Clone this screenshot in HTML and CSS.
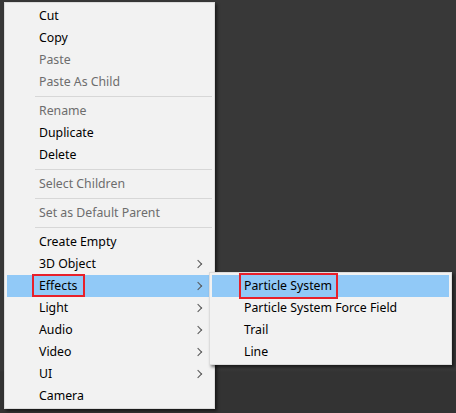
FILE: index.html
```html
<!DOCTYPE html>
<html>
<head>
<meta charset="utf-8">
<link rel="stylesheet" href="styles.css">
</head>
<body>
<div class="desk">
  <div class="menu main">
    <div class="item">Cut</div>
    <div class="item">Copy</div>
    <div class="item off">Paste</div>
    <div class="item off">Paste As Child</div>
    <div class="sep"></div>
    <div class="item off">Rename</div>
    <div class="item">Duplicate</div>
    <div class="item">Delete</div>
    <div class="sep"></div>
    <div class="item off">Select Children</div>
    <div class="sep"></div>
    <div class="item off">Set as Default Parent</div>
    <div class="sep"></div>
    <div class="item">Create Empty</div>
    <div class="item sub">3D Object</div>
    <div class="item sub hot"><span class="mark mark-a">Effects</span></div>
    <div class="item sub">Light</div>
    <div class="item sub">Audio</div>
    <div class="item sub">Video</div>
    <div class="item sub">UI</div>
    <div class="item">Camera</div>
  </div>
  <div class="menu child">
    <div class="item hot"><span class="mark mark-b">Particle System</span></div>
    <div class="item">Particle System Force Field</div>
    <div class="item">Trail</div>
    <div class="item">Line</div>
  </div>
</div>
</body>
</html>
```
FILE: styles.css
```css
html, body {
  margin: 0;
  padding: 0;
}
body {
  width: 456px;
  height: 413px;
  overflow: hidden;
  background: #383838;
  font-family: "Noto Sans", "Segoe UI", sans-serif;
  font-size: 12.3px;
}
.desk {
  position: relative;
  width: 456px;
  height: 413px;
  background: linear-gradient(#383838 0, #383838 370px, #333 372px);
}
.menu {
  position: absolute;
  box-sizing: border-box;
  background: #f2f2f2;
  border: 1px solid #dcdcdc;
  box-shadow: 2px 2px 3px rgba(0, 0, 0, 0.55);
  padding: 2px 2px 1px 2px;
  display: flex;
  flex-direction: column;
}
.main {
  left: 4px;
  top: 2px;
  width: 211px;
}
.child {
  left: 209px;
  top: 272px;
  width: 243px;
  padding-bottom: 1px;
}
.item {
  position: relative;
  height: 22px;
  line-height: 22px;
  padding-left: 32px;
  color: #000;
  white-space: nowrap;
}
.item.off {
  color: #6d6d6d;
}
.item.hot {
  background: #91c9f7;
}
.item.sub::after {
  content: "";
  position: absolute;
  right: 11px;
  top: 8px;
  width: 5px;
  height: 5px;
  border-right: 1px solid #555;
  border-top: 1px solid #555;
  transform: rotate(45deg);
}
.sep {
  height: 7px;
  box-sizing: border-box;
  margin-left: 28px;
  padding-top: 3px;
}
.sep::before {
  content: "";
  display: block;
  height: 1px;
  background: #d7d7d7;
}
.mark {
  position: relative;
  display: inline-block;
}
.mark::before {
  content: "";
  position: absolute;
  border: 2px solid #e8202a;
}
.mark-a::before {
  left: -7px;
  right: -8px;
  top: -1px;
  bottom: 0;
}
.mark-b::before {
  left: -5px;
  right: -6px;
  top: -2px;
  bottom: -2px;
}
```
